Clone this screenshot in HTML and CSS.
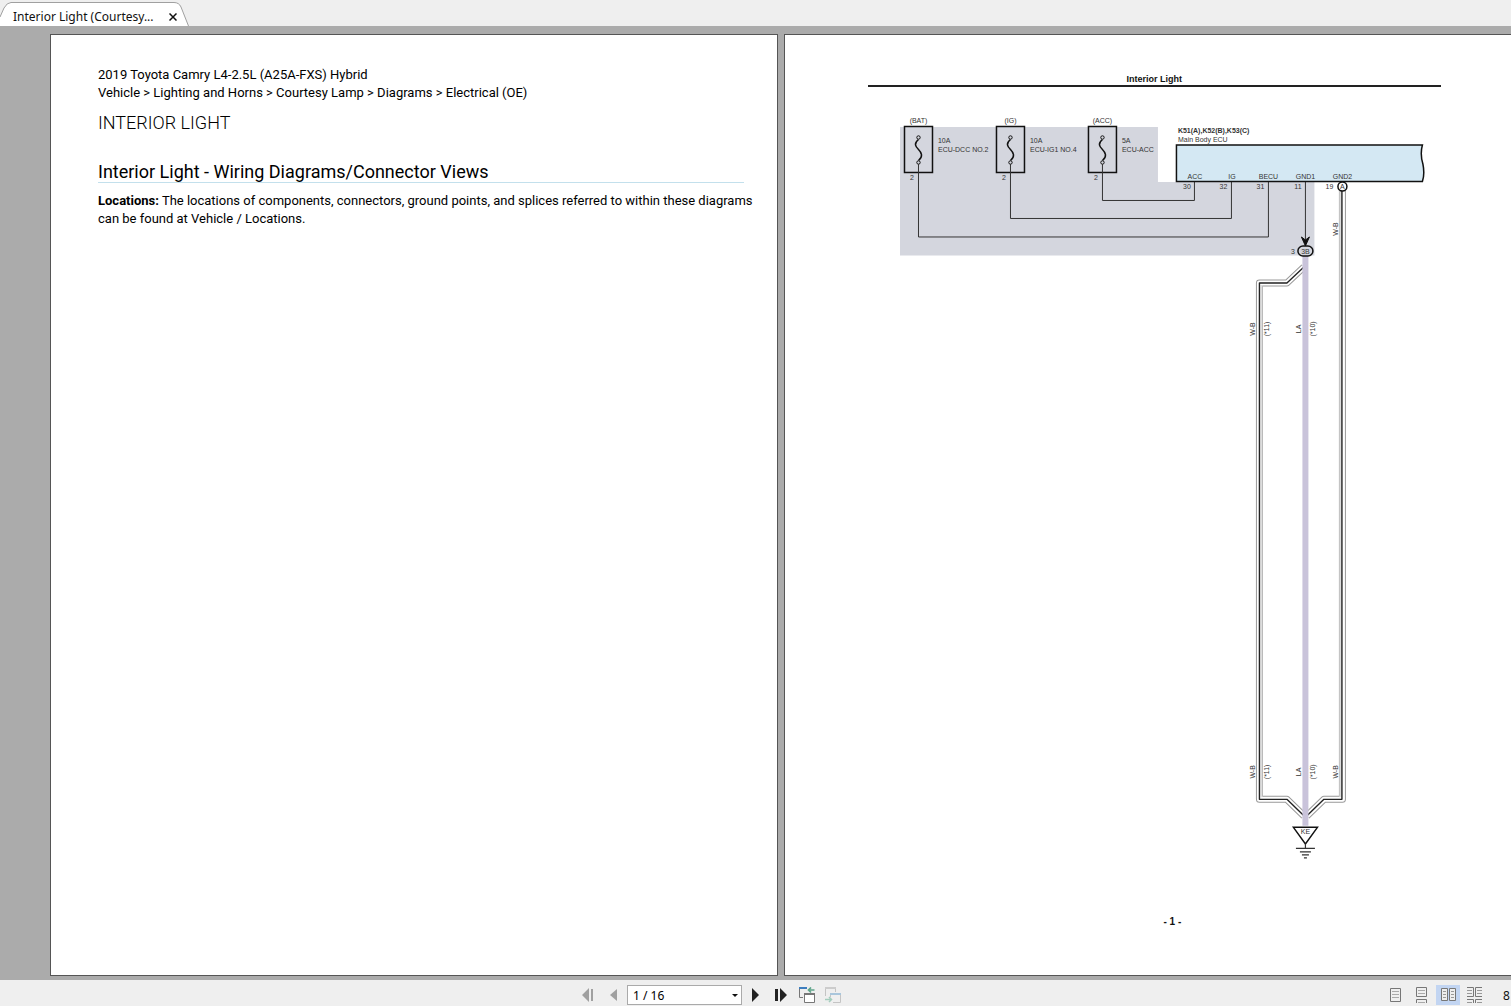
FILE: index.html
```html
<!DOCTYPE html>
<html lang="en">
<head>
    <meta charset="UTF-8">
    <meta name="viewport" content="width=device-width, initial-scale=1.0">
    <title>Interior Light (Courtesy Lamp)</title>
    <link rel="stylesheet" href="styles.css">
</head>
<body>
    <!-- Document tabs -->
    <header class="tab-bar">
        <svg class="tab-shape" width="190" height="26" viewBox="0 0 190 26">
            <path d="M0 26V17L4 8Q7 2.500 11 2.500H174Q179 2.500 181 7L188.500 26Z" fill="#fff"/>
            <path d="M0 17L4 8Q7 2.500 11 2.500H174Q179 2.500 181 7L188.500 26" fill="none" stroke="#a0a0a0"/>
        </svg>
        <div class="tab">
            <span class="tab-title">Interior Light (Courtesy...</span>
            <button class="tab-close" aria-label="Close tab">
                <svg width="8" height="8" viewBox="0 0 8 8"><path d="M0.500 0.500L7.500 7.500M7.500 0.500L0.500 7.500" stroke="#111" stroke-width="1.500"/></svg>
            </button>
        </div>
    </header>

    <!-- Two page view -->
    <main class="viewer">
        <section class="page text-page">
            <p>2019 Toyota Camry L4-2.5L (A25A-FXS) Hybrid</p>
            <p>Vehicle &gt; Lighting and Horns &gt; Courtesy Lamp &gt; Diagrams &gt; Electrical (OE)</p>
            <h1>INTERIOR LIGHT</h1>
            <h2>Interior Light - Wiring Diagrams/Connector Views</h2>
            <p class="note"><b>Locations:</b> The locations of components, connectors, ground points, and splices referred to within these diagrams can be found at Vehicle / Locations.</p>
        </section>

        <section class="page diagram-page">
            <h3>Interior Light</h3>
            <svg class="diagram" viewBox="868 87 573 783">
                <defs>
                    <g id="fuse">
                        <rect x="-14" y="-23" width="28" height="46" fill="none" stroke="#111" stroke-width="1.500"/>
                        <path d="M0 -10C-5 -6 -3 -3 0 0S5 7 0 11" fill="none" stroke="#111" stroke-width="1.500"/>
                        <circle cx="0" cy="-12" r="1.700" fill="#d4d6de" stroke="#111"/>
                        <circle cx="0" cy="13" r="1.700" fill="#d4d6de" stroke="#111"/>
                    </g>
                </defs>

                <!-- Junction block -->
                <path d="M900 127H1158V182H1314.500V255.500H900Z" fill="#d4d6de"/>
                <use href="#fuse" x="918.500" y="149.500"/>
                <use href="#fuse" x="1010.500" y="149.500"/>
                <use href="#fuse" x="1102.500" y="149.500"/>
                <g class="wire">
                    <path d="M918.500 164V237H1268.500V182"/>
                    <path d="M1010.500 164V218.500H1231.500V182"/>
                    <path d="M1102.500 164V200.500H1194.500V182"/>
                    <path d="M1305.500 182V240"/>
                </g>
                <path d="M1305.500 246L1301.500 237L1305.500 240L1309.500 237Z" fill="#111" stroke="#111"/>

                <!-- Main body ECU -->
                <path d="M1422.500 145H1176.500V181.500H1422.500Q1425 174 1423 164Q1420 154 1422.500 145Z" fill="#d4e8f3" stroke="#111" stroke-width="1.500"/>

                <!-- W-B and LA harness -->
                <g class="harness">
                    <path class="sheath" d="M1304 267L1287 283H1259.500V799.500H1287L1304 816"/>
                    <path class="sheath" d="M1342.500 190V799.500H1324L1307 816"/>
                    <path class="insulation" d="M1304 267L1287 283H1259.500V799.500H1287L1304 816"/>
                    <path class="insulation" d="M1342.500 190V799.500H1324L1307 816"/>
                    <path class="tint" d="M1261.500 285V797.500M1340.500 190V797.500"/>
                    <path class="core" d="M1304 267L1287 283H1259.500V799.500H1287L1304 816" stroke-width="1.400"/>
                    <path class="core" d="M1342 190V799.500H1324L1307 816" stroke-width="1.400"/>
                    <path class="lavender" d="M1305.500 256V826"/>
                </g>

                <rect x="1298" y="246" width="15" height="10" rx="5" fill="#d4d6de" stroke="#111" stroke-width="1.500"/>
                <circle cx="1342.500" cy="186.500" r="4.500" fill="#fff" stroke="#111" stroke-width="1.500"/>

                <!-- Ground point -->
                <path d="M1293.500 827.500H1317.500L1305.500 844Z" fill="#fff" stroke="#111" stroke-width="1.500"/>
                <path d="M1305.500 844V848.500M1296 848.500H1315M1300 852H1311M1302 855H1309M1304 858H1307" stroke="#333" stroke-width="1.200"/>

                <g class="label middle">
                    <text x="918.500" y="123">(BAT)</text>
                    <text x="1010.500" y="123">(IG)</text>
                    <text x="1102.500" y="123">(ACC)</text>
                    <text x="912" y="180">2</text>
                    <text x="1004" y="180">2</text>
                    <text x="1096" y="180">2</text>
                    <text x="1195" y="179">ACC</text>
                    <text x="1232" y="179">IG</text>
                    <text x="1268.500" y="179">BECU</text>
                    <text x="1305.500" y="179">GND1</text>
                    <text x="1342.500" y="179">GND2</text>
                    <text x="1187" y="189">30</text>
                    <text x="1223.500" y="189">32</text>
                    <text x="1260.500" y="189">31</text>
                    <text x="1298" y="189">11</text>
                    <text x="1329.500" y="189">19</text>
                    <text x="1342.500" y="189">A</text>
                    <text x="1293" y="254">3</text>
                    <text x="1305.500" y="254">3B</text>
                    <text x="1305.500" y="834">KE</text>
                </g>
                <g class="label">
                    <text x="938" y="143">10A</text>
                    <text x="938" y="152">ECU-DCC NO.2</text>
                    <text x="1030" y="143">10A</text>
                    <text x="1030" y="152">ECU-IG1 NO.4</text>
                    <text x="1122" y="143">5A</text>
                    <text x="1122" y="152">ECU-ACC</text>
                    <text class="strong" x="1178" y="133">K51(A),K52(B),K53(C)</text>
                    <text x="1178" y="142">Main Body ECU</text>
                </g>
                <g class="label middle">
                    <text transform="translate(1338 229) rotate(-90)">W-B</text>
                    <text transform="translate(1255 329) rotate(-90)">W-B</text>
                    <text transform="translate(1269 329) rotate(-90)">(*11)</text>
                    <text transform="translate(1301 329) rotate(-90)">LA</text>
                    <text transform="translate(1315 329) rotate(-90)">(*10)</text>
                    <text transform="translate(1255 772) rotate(-90)">W-B</text>
                    <text transform="translate(1269 772) rotate(-90)">(*11)</text>
                    <text transform="translate(1301 772) rotate(-90)">LA</text>
                    <text transform="translate(1315 772) rotate(-90)">(*10)</text>
                    <text transform="translate(1338 772) rotate(-90)">W-B</text>
                </g>
            </svg>
            <p class="page-number">- 1 -</p>
        </section>
    </main>

    <!-- Bottom toolbar -->
    <footer class="toolbar">
        <nav class="page-nav">
            <button aria-label="First page" disabled>
                <svg width="14" height="14" viewBox="0 0 14 14" fill="#a0a0a0"><path d="M8 0V14L1 7ZM12 1V13H10V1Z"/></svg>
            </button>
            <button aria-label="Previous page" disabled>
                <svg width="14" height="14" viewBox="0 0 14 14" fill="#a0a0a0"><path d="M10 1V13L3 7Z"/></svg>
            </button>
            <div class="page-picker">
                <select aria-label="Page">
                    <option>1 / 16</option>
                </select>
                <svg class="arrow" width="6" height="3" viewBox="0 0 6 3"><path d="M0 0H6L3 3Z" fill="#111"/></svg>
            </div>
            <button aria-label="Next page">
                <svg width="14" height="14" viewBox="0 0 14 14" fill="#222"><path d="M4 0V14L11 7Z"/></svg>
            </button>
            <button aria-label="Last page">
                <svg width="14" height="14" viewBox="0 0 14 14" fill="#222"><path d="M1 1H4V13H1ZM6 0V14L13 7Z"/></svg>
            </button>
            <button aria-label="Previous view">
                <svg width="16" height="16" viewBox="0 0 16 16" fill="none">
                    <path d="M0.500 2V10.500H4M5.500 7V15.500H15.500V7" stroke="#777"/>
                    <path d="M6 8H15V15H6Z" fill="#fff"/>
                    <path d="M0 0H8V2H0Z" fill="#3f7fbf"/>
                    <path d="M5 6H16V8H5Z" fill="#777"/>
                    <path d="M15.500 3H9.500M12 0.500L9.500 3L12 5.500" stroke="#5fa58a" stroke-width="1.700"/>
                </svg>
            </button>
            <button aria-label="Next view" disabled>
                <svg width="16" height="16" viewBox="0 0 16 16" fill="none">
                    <path d="M0.500 9V0.500H10.500V5M8 15.500H15.500V6.500M5.500 8V10" stroke="#c4c4c4"/>
                    <path d="M0 0H11V2H0Z" fill="#ccc"/>
                    <path d="M5 6H16V8H5Z" fill="#a9c6dc"/>
                    <path d="M0 12.500H6M4 10L6.500 12.500L4 15" stroke="#a4cdbd" stroke-width="1.500"/>
                </svg>
            </button>
        </nav>

        <div class="view-modes">
            <button aria-label="Single page">
                <svg width="12" height="14" viewBox="0 0 12 14" fill="none"><path d="M0.500 0.500H10.500V13.500H0.500Z" stroke="#777"/><path d="M2 3.500H9M2 6.500H9M2 9.500H9" stroke="#aaa"/></svg>
            </button>
            <button aria-label="Continuous">
                <svg width="12" height="16" viewBox="0 0 12 16" fill="none"><path d="M0.500 0.500H10.500V9.500H0.500ZM0.500 16V12.500H10.500V16" stroke="#777"/><path d="M2 3.500H9M2 6.500H9M2 15.500H9" stroke="#aaa"/></svg>
            </button>
            <button class="active" aria-label="Facing pages">
                <svg width="15" height="14" viewBox="0 0 15 14" fill="none"><path d="M0.500 0.500H6.500V12.500H0.500ZM8.500 0.500H14.500V12.500H8.500Z" fill="#eee" stroke="#777"/><path d="M2 3.500H5M2 6.500H5M2 9.500H5M10 3.500H13M10 6.500H13M10 9.500H13" stroke="#999"/></svg>
            </button>
            <button aria-label="Continuous facing pages">
                <svg width="15" height="16" viewBox="0 0 15 16" fill="none"><path d="M0 0.500H6.500V9.500H0M15 0.500H8.500V9.500H15M0 12.500H6.500V16M15 12.500H8.500V16" stroke="#777"/><path d="M0 3.500H5M0 6.500H5M10 3.500H15M10 6.500H15M0 15.500H5M10 15.500H15" stroke="#999"/></svg>
            </button>
            <span class="zoom-level">8</span>
        </div>
    </footer>
</body>
</html>
```

FILE: styles.css
```css
* {
    box-sizing: border-box;
}

body {
    margin: 0;
    height: 100vh;
    display: flex;
    flex-direction: column;
    overflow: hidden;
    background-color: #efefef;
    font-family: "Noto Sans", sans-serif;
    font-size: 12px;
    color: #111;
}

h1, h2, h3, p {
    margin: 0;
}

button {
    display: flex;
    align-items: center;
    justify-content: center;
    padding: 0;
    border: none;
    background: none;
    cursor: pointer;
}

.tab-bar {
    position: relative;
    flex: none;
    height: 26px;
}

.tab-shape {
    position: absolute;
    left: 0;
    top: 0;
}

.tab {
    position: relative;
    display: flex;
    align-items: center;
    width: 190px;
    height: 26px;
    padding: 7px 5px 0 13px;
}

.tab-title {
    flex: none;
    width: 148px;
    line-height: 18px;
    white-space: nowrap;
}

.tab-close {
    width: 24px;
    height: 18px;
}

/* Pages */
.viewer {
    flex: 1;
    min-height: 0;
    display: flex;
    gap: 6px;
    padding: 8px 0 4px 50px;
    overflow: hidden;
    background-color: #ababab;
}

.page {
    flex: none;
    height: 100%;
    aspect-ratio: 17 / 22;
    border: 1px solid #555;
    background-color: #fff;
    overflow: hidden;
}

.text-page {
    padding: 31px 33px 0 47px;
    font-family: Roboto, sans-serif;
    font-size: 13px;
    line-height: 18px;
    color: #000;
}

.text-page h1 {
    margin-top: 9px;
    font-size: 18px;
    font-weight: 300;
    line-height: 24px;
}

.text-page h2 {
    margin: 26px 0 9px;
    border-bottom: 1px solid #c3e0ec;
    font-size: 18px;
    font-weight: 400;
    line-height: 21px;
}

.note {
    margin-right: -16px;
}

.diagram-page {
    padding: 38px 70px 0 83px;
    font-family: "Liberation Sans", Arial, sans-serif;
}

.diagram-page h3 {
    border-bottom: 2px solid #222;
    font-size: 9px;
    line-height: 12px;
    text-align: center;
}

.diagram {
    display: block;
    width: 100%;
}

.label {
    font-size: 7px;
    fill: #333;
}

.middle {
    text-anchor: middle;
}

.strong {
    font-weight: bold;
}

.wire {
    fill: none;
    stroke: #333;
    stroke-width: 1px;
}

.harness {
    fill: none;
    stroke-linejoin: round;
}

.sheath {
    stroke: #999;
    stroke-width: 7px;
}

.insulation {
    stroke: #fff;
    stroke-width: 5px;
}

.tint {
    stroke: #ddd;
    stroke-width: 2px;
}

.core {
    stroke: #222;
}

.lavender {
    stroke: #c9c3da;
    stroke-width: 6px;
}

.page-number {
    margin-top: 46px;
    padding-left: 36px;
    font-size: 10px;
    font-weight: bold;
    line-height: 12px;
    text-align: center;
}

/* Toolbar */
.toolbar {
    flex: none;
    display: flex;
    align-items: center;
    height: 26px;
    padding: 4px 0 0 38px;
}

.page-nav,
.view-modes {
    display: flex;
    align-items: center;
    margin-left: auto;
}

.toolbar button {
    width: 26px;
    height: 20px;
}

.page-picker {
    position: relative;
}

.page-picker select {
    display: block;
    width: 115px;
    height: 20px;
    padding: 0 5px;
    border: 1px solid #aaa;
    border-radius: 0;
    background-color: #fff;
    font: inherit;
    color: #000;
    appearance: none;
}

.arrow {
    position: absolute;
    right: 4px;
    top: 9px;
}

.toolbar .active {
    width: 24px;
    margin: 0 1px;
    background-color: #c2d5f2;
}

.zoom-level {
    width: 8px;
    margin-left: 16px;
}
```
